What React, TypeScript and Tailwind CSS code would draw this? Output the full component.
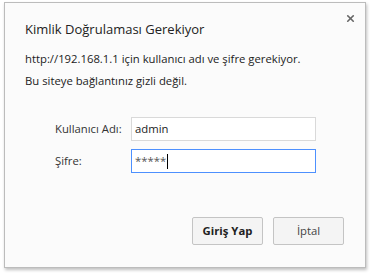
import { X } from 'lucide-react';

function Field({ label, value, focused }: { label: string; value: string; focused?: boolean }) {
  return (
    <div className="flex items-center">
      <div className="w-[76px] text-[11.3px] text-[#333]">{label}</div>
      <div
        className={
          focused
            ? 'flex h-[24px] w-[185px] items-center border border-[#4d90fe] bg-white px-[3px] text-[11.3px] text-[#555]'
            : 'flex h-[24px] w-[185px] items-center border border-[#d9d9d9] bg-white px-[3px] text-[11.3px] text-[#222]'
        }
      >
        {value}
        {focused ? <span className="ml-[1px] h-[15px] w-px bg-black" /> : null}
      </div>
    </div>
  );
}

export default function App() {
  return (
    <div className="h-[273px] w-[380px] bg-white pt-[2px] pl-[4px] font-['Open_Sans',sans-serif]">
      <div className="relative flex h-[266px] w-[362px] flex-col border border-[#bcbcbc] bg-[#fbfbfb] shadow-[1px_2px_3px_rgba(0,0,0,0.25)]">
        <button className="absolute top-[10px] right-[9px] text-[#666]">
          <X size={11} strokeWidth={3.5} />
        </button>

        <div className="pt-[15px] pl-[20px] text-[13px] leading-[22px] text-[#222]">Kimlik Doğrulaması Gerekiyor</div>
        <div className="pt-[11px] pl-[20px] text-[11.3px] leading-[16px] text-[#222]">
          http://192.168.1.1 için kullanıcı adı ve şifre gerekiyor.
        </div>
        <div className="pt-[6px] pl-[20px] text-[11.3px] leading-[16px] text-[#222]">Bu siteye bağlantınız gizli değil.</div>

        <div className="flex flex-col gap-[8px] pt-[28px] pl-[50px]">
          <Field label="Kullanıcı Adı:" value="admin" />
          <Field label="Şifre:" value="*****" focused />
        </div>

        <div className="mt-auto flex justify-end gap-[10px] pr-[21px] pb-[22px]">
          <button className="h-[28px] w-[71px] rounded-[2px] border border-[#c4c4c4] bg-[#f4f4f4] text-[11.3px] font-bold text-[#222]">
            Giriş Yap
          </button>
          <button className="h-[28px] w-[71px] rounded-[2px] border border-[#c4c4c4] bg-[#f4f4f4] text-[11.3px] text-[#444]">
            İptal
          </button>
        </div>
      </div>
    </div>
  );
}
